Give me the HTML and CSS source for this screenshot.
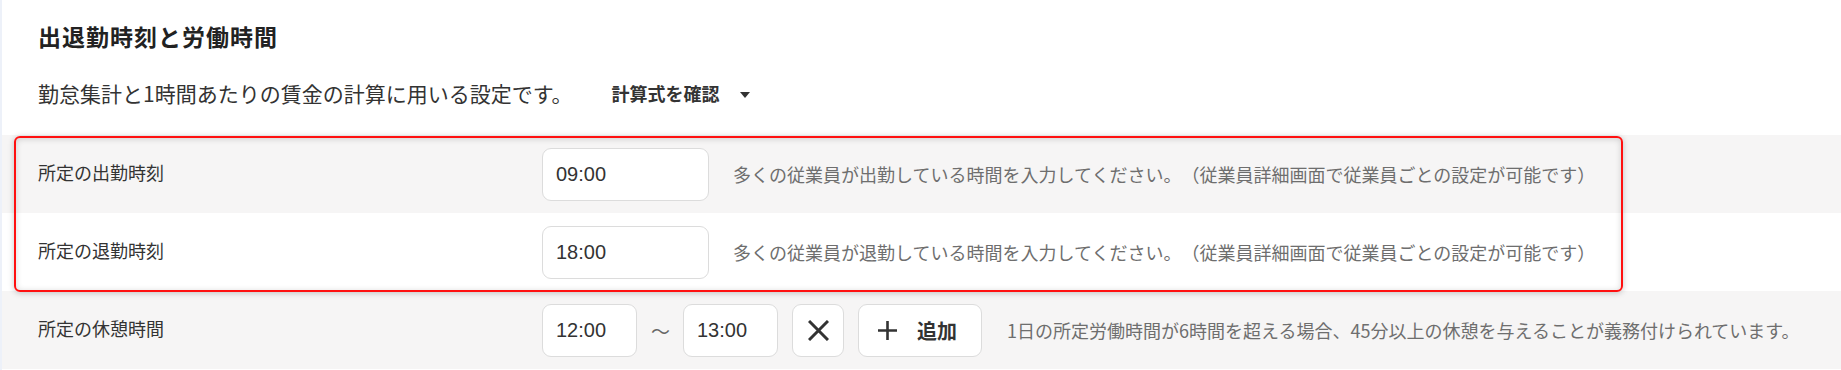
FILE: index.html
```html
<!DOCTYPE html>
<html lang="ja">
<head>
<meta charset="utf-8">
<title>出退勤時刻と労働時間</title>
<link rel="stylesheet" href="styles.css">
</head>
<body>
<div class="page">
  <div class="head">
    <h2 class="title">出退勤時刻と労働時間</h2>
    <div class="desc-row">
      <p class="desc">勤怠集計と1時間あたりの賃金の計算に用いる設定です。</p>
      <button class="formula" type="button">計算式を確認<span class="caret"></span></button>
    </div>
  </div>
  <div class="rows">
    <div class="highlight-group">
      <div class="row grey">
        <div class="label">所定の出勤時刻</div>
        <div class="field">
          <div class="time wide">09:00</div>
          <span class="help">多くの従業員が出勤している時間を入力してください。（従業員詳細画面で従業員ごとの設定が可能です）</span>
        </div>
      </div>
      <div class="row">
        <div class="label">所定の退勤時刻</div>
        <div class="field">
          <div class="time wide">18:00</div>
          <span class="help">多くの従業員が退勤している時間を入力してください。（従業員詳細画面で従業員ごとの設定が可能です）</span>
        </div>
      </div>
      <div class="highlight"></div>
    </div>
    <div class="row grey">
      <div class="label">所定の休憩時間</div>
      <div class="field break">
        <div class="time narrow">12:00</div>
        <span class="tilde">～</span>
        <div class="time narrow">13:00</div>
        <button class="icon-btn" type="button" aria-label="削除">
          <svg width="21" height="21" viewBox="0 0 21 21"><path d="M1 1 L20 20 M20 1 L1 20" stroke="#333" stroke-width="3" fill="none"/></svg>
        </button>
        <button class="add-btn" type="button">
          <svg width="19" height="19" viewBox="0 0 19 19"><path d="M9.5 0 V19 M0 9.5 H19" stroke="#333" stroke-width="2.6" fill="none"/></svg>
          <span>追加</span>
        </button>
        <span class="help help-break">1日の所定労働時間が6時間を超える場合、45分以上の休憩を与えることが義務付けられています。</span>
      </div>
    </div>
  </div>
</div>
</body>
</html>
```
FILE: styles.css
```css
html, body {
  margin: 0;
  padding: 0;
}
body {
  background: #edf1f9;
  font-family: "Noto Sans CJK JP", "Noto Sans", sans-serif;
  color: #333;
  text-spacing-trim: space-all;
}
.page {
  margin-left: 2px;
  background: #fff;
  padding-top: 20px;
  min-height: 370px;
  box-sizing: border-box;
}
.head {
  padding-left: 36px;
}
.title {
  margin: 0;
  font-size: 23px;
  line-height: 32px;
  font-weight: 700;
  letter-spacing: 1px;
  color: #222;
}
.desc-row {
  display: flex;
  align-items: center;
  margin-top: 26px;
  margin-bottom: 27px;
  height: 30px;
}
.desc {
  margin: 0;
  font-size: 21px;
  line-height: 30px;
  color: #333;
}
.formula {
  margin-left: 39px;
  padding: 0;
  border: 0;
  background: none;
  font-family: inherit;
  font-size: 18px;
  font-weight: 700;
  line-height: 30px;
  color: #333;
  display: flex;
  align-items: center;
}
.caret {
  display: inline-block;
  width: 0;
  height: 0;
  margin-left: 20px;
  margin-top: 3px;
  border-left: 5px solid transparent;
  border-right: 5px solid transparent;
  border-top: 6px solid #333;
}
.rows {
  display: flex;
  flex-direction: column;
}
.highlight-group {
  position: relative;
}
.highlight {
  position: absolute;
  left: 12px;
  top: 1px;
  width: 1609px;
  height: 156px;
  box-sizing: border-box;
  border: 2px solid #ff1010;
  border-radius: 6px;
  box-shadow: 0 1px 6px rgba(0, 0, 0, 0.22), inset 0 1px 6px rgba(0, 0, 0, 0.16);
  pointer-events: none;
}
.row {
  display: grid;
  grid-template-columns: 504px 1fr;
  align-items: center;
  height: 78px;
  padding-left: 36px;
  background: #fff;
}
.row.grey {
  background: #f6f5f5;
}
.label {
  font-size: 18px;
  line-height: 26px;
  color: #333;
  margin-top: -4px;
}
.field {
  display: flex;
  align-items: center;
}
.field.break {
  gap: 14px;
}
.time {
  box-sizing: border-box;
  height: 53px;
  border: 1px solid #dcdcdc;
  border-radius: 9px;
  background: #fff;
  padding-left: 13px;
  display: flex;
  align-items: center;
  font-family: "Liberation Sans", Arial, sans-serif;
  font-size: 20px;
  color: #333;
}
.time.wide {
  width: 167px;
}
.time.narrow {
  width: 95px;
}
.help {
  margin-left: 24px;
  font-size: 18px;
  line-height: 26px;
  color: #6e6e6e;
  white-space: nowrap;
}
.help-break {
  margin-left: 11px;
}
.tilde {
  width: 18px;
  font-size: 19px;
  color: #666;
  text-align: center;
}
.icon-btn, .add-btn {
  box-sizing: border-box;
  height: 53px;
  border: 1px solid #dcdcdc;
  border-radius: 9px;
  background: #fff;
  padding: 0;
  display: flex;
  align-items: center;
  justify-content: center;
  font-family: inherit;
  cursor: pointer;
}
.icon-btn {
  width: 52px;
}
.add-btn {
  width: 124px;
  gap: 20px;
  padding-right: 5px;
  font-size: 20px;
  font-weight: 700;
  color: #333;
}
```
